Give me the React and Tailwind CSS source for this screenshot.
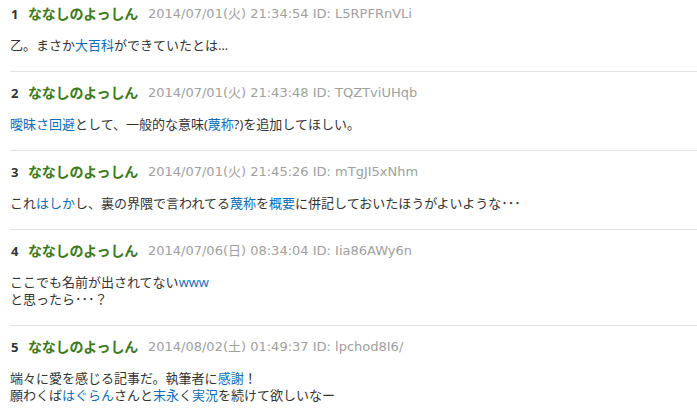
import React from "react";

const F = { fontFamily: '"Open Sans", "Noto Sans CJK JP", sans-serif' };

const L = ({ children }) => <span className="text-[#0b6cb7]">{children}</span>;

const posts = [
  {
    n: 1,
    date: "2014/07/01(火) 21:34:54 ID: L5RPFRnVLi",
    body: [<>乙。まさか<L>大百科</L>ができていたとは…</>],
  },
  {
    n: 2,
    date: "2014/07/01(火) 21:43:48 ID: TQZTviUHqb",
    body: [<><L>曖昧さ回避</L>として、一般的な意味(<L>蔑称</L>?)を追加してほしい。</>],
  },
  {
    n: 3,
    date: "2014/07/01(火) 21:45:26 ID: mTgJI5xNhm",
    body: [<>これ<L>はしか</L>し、裏の界隈で言われてる<L>蔑称</L>を<L>概要</L>に併記しておいたほうがよいような･･･</>],
  },
  {
    n: 4,
    date: "2014/07/06(日) 08:34:04 ID: Iia86AWy6n",
    body: [<>ここでも名前が出されてない<L>www</L></>, <>と思ったら･･･？</>],
  },
  {
    n: 5,
    date: "2014/08/02(土) 01:49:37 ID: lpchod8I6/",
    body: [<>端々に愛を感じる記事だ。執筆者に<L>感謝</L>！</>, <>願わくば<L>はぐらん</L>さんと<L>末永</L>く<L>実況</L>を続けて欲しいなー</>],
  },
];

export default function App() {
  return (
    <div className="bg-white w-[697px] h-[418px] overflow-hidden pt-[5px] pl-[10px]" style={F}>
      {posts.map((p, i) => (
        <div key={p.n} className={(i > 0 ? "mt-[12px] " : "") + (i < posts.length - 1 ? "border-b border-[#e3e3e3] " : "") + "pb-[17px]"}>
          <div className="flex items-center h-[18px] text-[13px] leading-[18px] pl-[1px]">
            <span className="font-bold text-[#333] w-[17px]">{p.n}</span>
            <span className="font-bold text-[#3e7a1c] text-[14px] tracking-[-0.2px]">ななしのよっしん</span>
            <span className="text-[#a0a0a0] ml-[10px] text-[13px] font-['DejaVu_Sans','Noto_Sans_CJK_JP',sans-serif]">
              {p.date}
            </span>
          </div>
          <div className="mt-[14px] text-[13px] leading-[17px] text-[#333]">
            {p.body.map((b, j) => (
              <div key={j}>{b}</div>
            ))}
          </div>
        </div>
      ))}
    </div>
  );
}
